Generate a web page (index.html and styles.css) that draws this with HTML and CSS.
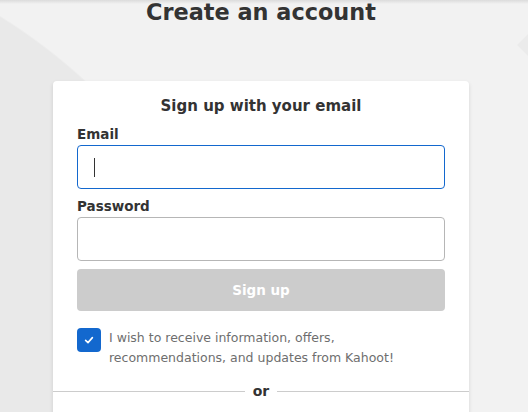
FILE: index.html
```html
<!DOCTYPE html>
<html lang="en">
<head>
<meta charset="utf-8">
<title>Create an account</title>
<link rel="stylesheet" href="styles.css">
</head>
<body>
<div class="topshadow"></div>
<div class="diamond"></div>
<main class="page">
  <h1 class="title">Create an account</h1>
  <section class="card">
    <h2 class="card-title">Sign up with your email</h2>
    <form class="form">
      <label class="field">
        <span class="label">Email</span>
        <span class="input input-focus"><span class="caret"></span></span>
      </label>
      <label class="field">
        <span class="label">Password</span>
        <span class="input"></span>
      </label>
      <button type="button" class="btn">Sign up</button>
      <div class="consent">
        <span class="checkbox">
          <svg width="12" height="12" viewBox="0 0 12 12"><path d="M2.6 6.3 L5 8.6 L9.4 3.6" fill="none" stroke="#fff" stroke-width="1.6" stroke-linecap="round" stroke-linejoin="round"/></svg>
        </span>
        <p class="consent-text">I wish to receive information, offers, recommendations, and updates from Kahoot!</p>
      </div>
    </form>
    <div class="divider"><span class="or">or</span></div>
  </section>
</main>
</body>
</html>
```
FILE: styles.css
```css
html, body {
  margin: 0;
  height: 100%;
  overflow: hidden;
}
body {
  position: relative;
  font-family: "DejaVu Sans", "Open Sans", sans-serif;
  color: #333;
  background:
    radial-gradient(circle 570px at -300px 500px, #e9e9e9 99.7%, rgba(233,233,233,0) 100%),
    #f2f2f2;
}
.topshadow {
  position: absolute;
  left: 0; right: 0; top: 0;
  height: 4px;
  background: linear-gradient(#dcdcdc, rgba(242,242,242,0));
  z-index: 2;
}
.diamond {
  position: absolute;
  left: 517px;
  top: 45px;
  width: 60px;
  height: 60px;
  background: #ebebeb;
  transform-origin: 0 0;
  transform: rotate(-45deg);
}
.page {
  position: relative;
  display: flex;
  flex-direction: column;
  align-items: center;
  padding-right: 6px;
}
.title {
  margin: -3px 0 0 0;
  font-size: 22.4px;
  line-height: 30px;
  font-weight: 700;
  color: #333;
}
.card {
  margin-top: 54px;
  width: 368px;
  padding: 13px 24px 0 24px;
  background: #fff;
  border-radius: 4px;
  box-shadow: 0 2px 4px rgba(0,0,0,0.12);
  min-height: 400px;
}
.card-title {
  margin: 0;
  text-align: center;
  font-size: 15px;
  line-height: 24px;
  font-weight: 700;
  color: #333;
}
.form {
  display: flex;
  flex-direction: column;
  margin-top: 7px;
}
.field {
  display: flex;
  flex-direction: column;
  margin-bottom: 8px;
}
.label {
  font-size: 13.5px;
  line-height: 18px;
  font-weight: 700;
  color: #333;
  margin-bottom: 2px;
}
.input {
  display: flex;
  align-items: center;
  box-sizing: border-box;
  height: 44px;
  border: 1px solid #b6b6b6;
  border-radius: 4px;
  padding-left: 16px;
}
.input-focus {
  border-color: #1368ce;
}
.caret {
  width: 1px;
  height: 19px;
  background: #333;
}
.btn {
  height: 42px;
  margin-top: 0;
  border: 0;
  border-radius: 4px;
  background: #cccccc;
  color: #fff;
  font-family: inherit;
  font-size: 13.5px;
  font-weight: 700;
}
.consent {
  display: flex;
  align-items: flex-start;
  gap: 8px;
  margin-top: 17px;
}
.checkbox {
  flex: none;
  width: 24px;
  height: 24px;
  border-radius: 4px;
  background: #1368ce;
  display: flex;
  align-items: center;
  justify-content: center;
}
.consent-text {
  margin: 0;
  font-size: 12.5px;
  line-height: 20px;
  color: #6e6e6e;
}
.divider {
  margin: 14px -24px 0 -24px;
  display: flex;
  align-items: center;
  gap: 8px;
}
.divider::before, .divider::after {
  content: "";
  flex: 1;
  height: 1px;
  background: #cccccc;
}
.or {
  font-size: 14px;
  font-weight: 700;
  color: #333;
  line-height: 18px;
}
```
